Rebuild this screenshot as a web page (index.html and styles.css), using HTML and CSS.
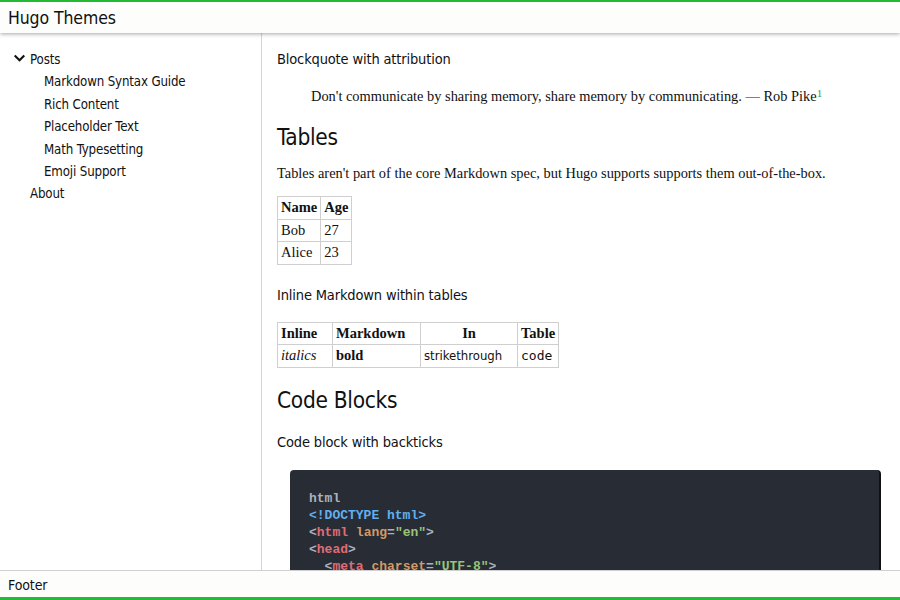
FILE: index.html
```html
<!DOCTYPE html>
<html lang="en">
<head>
<meta charset="UTF-8">
<title>Hugo Themes</title>
<link rel="stylesheet" href="styles.css">
</head>
<body>
<div class="page">
  <header class="topbar">Hugo Themes</header>
  <div class="middle">
    <nav class="sidebar">
      <ul class="nav">
        <li class="nav-group">
          <div class="nav-head"><svg class="chev" viewBox="0 0 12 10" width="11" height="9"><path d="M1.5 2.5 L6 7 L10.5 2.5" fill="none" stroke="#111" stroke-width="2.4" stroke-linecap="square"/></svg>Posts</div>
          <ul class="sub">
            <li>Markdown Syntax Guide</li>
            <li>Rich Content</li>
            <li>Placeholder Text</li>
            <li>Math Typesetting</li>
            <li>Emoji Support</li>
          </ul>
        </li>
        <li class="nav-item">About</li>
      </ul>
    </nav>
    <main class="content">
      <h3 class="h3">Blockquote with attribution</h3>
      <blockquote class="quote">Don't communicate by sharing memory, share memory by communicating. — Rob Pike<sup class="fn">1</sup></blockquote>
      <h2 class="h2">Tables</h2>
      <p class="para">Tables aren't part of the core Markdown spec, but Hugo supports supports them out-of-the-box.</p>
      <table class="tbl">
        <thead><tr><th>Name</th><th>Age</th></tr></thead>
        <tbody><tr><td>Bob</td><td>27</td></tr><tr><td>Alice</td><td>23</td></tr></tbody>
      </table>
      <h3 class="h3 h3b">Inline Markdown within tables</h3>
      <table class="tbl tbl2">
        <thead><tr><th>Inline</th><th>Markdown</th><th class="wide">In</th><th>Table</th></tr></thead>
        <tbody><tr><td><em>italics</em></td><td><strong>bold</strong></td><td class="sans">strikethrough</td><td class="mono">code</td></tr></tbody>
      </table>
      <h2 class="h2 h2b">Code Blocks</h2>
      <h3 class="h3 h3c">Code block with backticks</h3>
      <pre class="code"><span class="c-g">html</span>
<span class="c-b">&lt;!DOCTYPE html&gt;</span>
<span class="c-g">&lt;</span><span class="c-r">html</span> <span class="c-o">lang</span><span class="c-g">=</span><span class="c-s">"en"</span><span class="c-g">&gt;</span>
<span class="c-g">&lt;</span><span class="c-r">head</span><span class="c-g">&gt;</span>
  <span class="c-g">&lt;</span><span class="c-r">meta</span> <span class="c-o">charset</span><span class="c-g">=</span><span class="c-s">"UTF-8"</span><span class="c-g">&gt;</span>
  <span class="c-g">&lt;</span><span class="c-r">title</span><span class="c-g">&gt;</span>Example HTML5 Document<span class="c-g">&lt;/</span><span class="c-r">title</span><span class="c-g">&gt;</span>
<span class="c-g">&lt;/</span><span class="c-r">head</span><span class="c-g">&gt;</span></pre>
    </main>
  </div>
  <footer class="footer">Footer</footer>
</div>
</body>
</html>
```
FILE: styles.css
```css
html, body {
  margin: 0;
  padding: 0;
  height: 100%;
}
body {
  font-family: "DejaVu Sans Condensed", "DejaVu Sans", sans-serif;
  color: #111;
  background: #fff;
}
.page {
  display: flex;
  flex-direction: column;
  height: 600px;
  overflow: hidden;
}
.topbar {
  flex: 0 0 auto;
  height: 33px;
  box-sizing: border-box;
  border-top: 2px solid #22bb33;
  padding: 6px 8px 0;
  font-size: 17.5px;
  letter-spacing: -0.1px;
  line-height: 20px;
  background: #fdfdfb;
  box-shadow: 0 1px 4px rgba(0,0,0,0.35);
  position: relative;
  z-index: 2;
}
.middle {
  flex: 1 1 auto;
  display: flex;
  min-height: 0;
  overflow: hidden;
}
.sidebar {
  flex: 0 0 261px;
  border-right: 1px solid #d4d4d4;
  background: #fff;
  padding-top: 15px;
  font-size: 13.2px;
  letter-spacing: -0.15px;
}
.nav, .sub {
  list-style: none;
  margin: 0;
  padding: 0;
}
.nav-head {
  display: flex;
  align-items: center;
  padding-left: 14px;
  height: 22px;
}
.chev {
  margin-right: 5px;
  margin-top: -2px;
}
.sub li {
  padding-left: 44px;
  height: 22.5px;
  line-height: 23px;
}
.nav-item {
  padding-left: 30px;
  height: 22px;
  line-height: 22px;
}
.content {
  flex: 1 1 auto;
  padding: 15px 19px 0 15px;
  min-width: 0;
  overflow: hidden;
}
.h3 {
  font-size: 14.5px;
  letter-spacing: -0.15px;
  font-weight: normal;
  margin: 0;
  line-height: 22px;
}
.quote {
  font-family: "Liberation Serif", serif;
  font-size: 14.4px;
  margin: 16px 0 0 34px;
  line-height: 20px;
}
.fn {
  color: #22aa33;
  font-size: 11px;
  vertical-align: top;
  position: relative;
  top: -3px;
}
.h2 {
  font-size: 22.5px;
  letter-spacing: -0.3px;
  font-weight: normal;
  margin: 16px 0 0;
  line-height: 30px;
}
.para {
  font-family: "Liberation Serif", serif;
  font-size: 14.4px;
  margin: 11px 0 0;
  line-height: 20px;
}
.tbl {
  border-collapse: collapse;
  font-family: "Liberation Serif", serif;
  font-size: 14.5px;
  margin-top: 13px;
}
.tbl th, .tbl td {
  border: 1px solid #cfcfcf;
  padding: 0 3px;
  height: 21.5px;
  text-align: left;
}
.tbl th { font-weight: bold; }
.tbl2 th:nth-child(1), .tbl2 td:nth-child(1) { width: 48px; }
.tbl2 th:nth-child(2), .tbl2 td:nth-child(2) { width: 81px; }
.tbl2 .wide { text-align: center; width: 90px; }
.tbl2 td.sans { font-family: "DejaVu Sans Condensed", "DejaVu Sans", sans-serif; font-size: 13px; }
.tbl2 td.mono { font-family: "DejaVu Sans Mono", monospace; font-size: 13px; }
.h3b { margin-top: 19px; }
.tbl2 { margin-top: 16px; }
.h2b { margin-top: 17px; }
.h3c { margin-top: 16px; }
.code {
  margin: 17px 0 0 13px;
  background: #282c34;
  color: #abb2bf;
  border-radius: 4px;
  border-right: 2px solid #111;
  padding: 20px 19px;
  font-family: "Liberation Mono", monospace;
  font-weight: bold;
  font-size: 13px;
  line-height: 17px;
}
.c-g { color: #abb2bf; }
.c-b { color: #61afef; }
.c-r { color: #e06c75; }
.c-o { color: #d19a66; }
.c-s { color: #98c379; }
.footer {
  flex: 0 0 auto;
  height: 30px;
  box-sizing: border-box;
  border-top: 1px solid #d0d0d0;
  border-bottom: 3px solid #22bb33;
  background: #fdfdfb;
  font-size: 14px;
  letter-spacing: -0.1px;
  padding: 5px 8px 0;
  line-height: 18px;
  position: relative;
  z-index: 2;
}
```
